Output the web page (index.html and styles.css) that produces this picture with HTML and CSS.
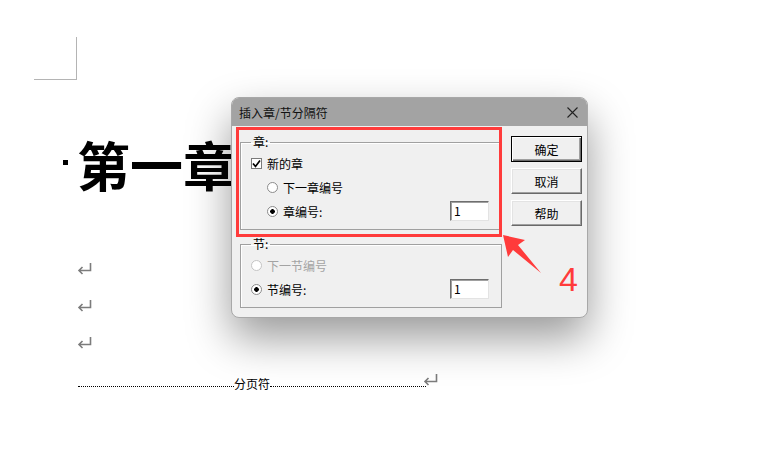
FILE: index.html
```html
<!DOCTYPE html>
<html lang="zh-CN">
<head>
    <meta charset="UTF-8">
    <title>插入章/节分隔符</title>
    <link rel="stylesheet" href="styles.css">
</head>
<body>
<div class="doc">
    <div class="corner"></div>
    <h1 class="chapter"><span class="keep"></span>第一章</h1>
    <p class="para"><svg class="ret" width="15" height="12" viewBox="0 0 15 12"><path d="M13.5 0 V7.5 H2 M5.5 4 L2 7.5 L5.5 11"/></svg></p>
    <p class="para"><svg class="ret" width="15" height="12" viewBox="0 0 15 12"><path d="M13.5 0 V7.5 H2 M5.5 4 L2 7.5 L5.5 11"/></svg></p>
    <p class="para"><svg class="ret" width="15" height="12" viewBox="0 0 15 12"><path d="M13.5 0 V7.5 H2 M5.5 4 L2 7.5 L5.5 11"/></svg></p>
    <div class="page-break">
        <span class="dots"></span>
        <span class="pb-text">分页符</span>
        <span class="dots"></span>
        <svg class="ret pb-ret" width="15" height="12" viewBox="0 0 15 12"><path d="M13.5 0 V7.5 H2 M5.5 4 L2 7.5 L5.5 11"/></svg>
    </div>
</div>

<div class="dialog">
    <div class="titlebar">
        <span>插入章/节分隔符</span>
        <svg class="close" width="11" height="11" viewBox="0 0 11 11"><path d="M0.5 0.5 L10.5 10.5 M10.5 0.5 L0.5 10.5"/></svg>
    </div>
    <div class="dialog-body">
        <div class="groups">
            <fieldset class="group">
                <legend>章:</legend>
                <div class="row">
                    <span class="check"><svg width="9" height="9" viewBox="0 0 9 9"><path d="M1 4.5 L3.5 7.5 L8 1.5"/></svg></span>
                    <span>新的章</span>
                </div>
                <div class="row indent">
                    <span class="radio"></span>
                    <span>下一章编号</span>
                </div>
                <div class="row indent">
                    <span class="radio on"></span>
                    <span>章编号:</span>
                    <span class="num">1</span>
                </div>
            </fieldset>
            <fieldset class="group">
                <legend>节:</legend>
                <div class="row disabled">
                    <span class="radio"></span>
                    <span>下一节编号</span>
                </div>
                <div class="row">
                    <span class="radio on"></span>
                    <span>节编号:</span>
                    <span class="num">1</span>
                </div>
            </fieldset>
        </div>
        <div class="buttons">
            <button class="btn default">确定</button>
            <button class="btn">取消</button>
            <button class="btn">帮助</button>
        </div>
    </div>
</div>

<div class="highlight"></div>
<svg class="callout-arrow" width="45" height="45" viewBox="0 0 45 45"><polygon points="3,3 25,8 18,13 41,41 13,18 8,25"/></svg>
<div class="callout-num">4</div>
</body>
</html>
```

FILE: styles.css
```css
body {
    margin: 0;
    padding: 0;
    background-color: #fff;
    font-family: "Noto Sans CJK SC", "Liberation Sans", sans-serif;
    position: relative;
    height: 453px;
    overflow: hidden;
}

/* document behind the dialog */
.doc {
    padding-top: 37px;
}

.corner {
    margin-left: 34px;
    width: 42px;
    height: 42px;
    border-right: 1px solid #b4b4b4;
    border-bottom: 1px solid #b4b4b4;
}

.chapter {
    margin: 54px 0 0 0;
    padding-left: 63px;
    font-size: 53px;
    line-height: 60px;
    font-weight: 700;
    color: #000;
    display: flex;
    align-items: center;
}

.keep {
    width: 5px;
    height: 5px;
    background-color: #000;
    margin-right: 9px;
    margin-top: -3px;
}

.para {
    margin: 0;
    height: 37px;
    padding-left: 77px;
    display: flex;
    align-items: center;
}

.para:first-of-type {
    margin-top: 56px;
}

.ret path {
    fill: none;
    stroke: #7c7c7c;
    stroke-width: 1.6;
}

.page-break {
    margin: 15px 0 0 78px;
    width: 360px;
    height: 16px;
    display: flex;
    align-items: center;
}

.dots {
    flex: 1;
    height: 0;
    border-top: 1px dotted #000;
    margin-top: 4px;
}

.pb-text {
    font-size: 12px;
    line-height: 16px;
    color: #000;
}

.pb-ret {
    align-self: flex-start;
    margin-left: -3px;
    margin-top: -2px;
}

/* dialog */
.dialog {
    position: absolute;
    left: 231px;
    top: 97px;
    width: 357px;
    height: 221px;
    box-sizing: border-box;
    background-color: #f0f0f0;
    border: 1px solid #a8a8a8;
    border-radius: 8px;
    overflow: hidden;
    box-shadow: 0px 20px 44px rgba(0, 0, 0, 0.4);
    font-size: 12px;
    color: #000;
}

.titlebar {
    height: 28px;
    background-color: #a3a3a3;
    display: flex;
    align-items: center;
    justify-content: space-between;
    padding: 0 9px 0 7px;
    color: #111;
}

.close path {
    stroke: #222;
    stroke-width: 1.1;
}

.dialog-body {
    display: flex;
    gap: 9px;
    padding: 9px 5px 0 8px;
}

.groups {
    display: flex;
    flex-direction: column;
    gap: 7px;
}

.group {
    margin: 0;
    width: 262px;
    box-sizing: border-box;
    padding: 2px 12px 6px 10px;
    border: 1px solid #a0a0a0;
    box-shadow: inset 1px 1px #fff;
    min-inline-size: 0;
}

.group legend {
    padding: 0 2px;
    font-size: 12px;
    line-height: 14px;
}

.row {
    height: 24px;
    display: flex;
    align-items: center;
    gap: 5px;
}

.row.indent {
    padding-left: 16px;
}

.row.disabled {
    color: #a3a3a3;
}

.check {
    width: 11px;
    height: 11px;
    box-sizing: border-box;
    border: 1px solid #7a7a7a;
    background-color: #fff;
    display: flex;
    align-items: center;
    justify-content: center;
}

.check path {
    fill: none;
    stroke: #000;
    stroke-width: 1.7;
}

.radio {
    width: 11px;
    height: 11px;
    box-sizing: border-box;
    border-radius: 50%;
    border: 1px solid #8c8c8c;
    background-color: #fff;
}

.radio.on {
    background: radial-gradient(circle, #000 2px, #fff 2.6px);
}

.disabled .radio {
    border-color: #c4c4c4;
}

.num {
    margin-left: auto;
    width: 39px;
    height: 20px;
    box-sizing: border-box;
    border: 1px solid;
    border-color: #6e6e6e #e3e3e3 #e3e3e3 #6e6e6e;
    box-shadow: inset 1px 1px #a0a0a0;
    background-color: #fff;
    padding-left: 3px;
    line-height: 18px;
}

.buttons {
    display: flex;
    flex-direction: column;
    gap: 6px;
    margin-top: 1px;
}

.btn {
    width: 71px;
    height: 26px;
    padding: 0;
    font-family: inherit;
    font-size: 12px;
    color: #000;
    background-color: #f0f0f0;
    border: 1px solid;
    border-color: #fff #696969 #696969 #fff;
    box-shadow: inset -1px -1px #a0a0a0, inset 1px 1px #e3e3e3;
}

.btn.default {
    border-color: #000;
    box-shadow: inset 1px 1px #fff, inset -1px -1px #696969, inset -2px -2px #a0a0a0;
}

/* annotation on top of the screenshot */
.highlight {
    position: absolute;
    left: 236px;
    top: 127px;
    width: 266px;
    height: 110px;
    box-sizing: border-box;
    border: 3px solid #ff3b3b;
}

.callout-arrow {
    position: absolute;
    left: 500px;
    top: 232px;
}

.callout-arrow polygon {
    fill: #ff3b3b;
}

.callout-num {
    position: absolute;
    left: 559px;
    top: 261px;
    font-family: "Liberation Sans", sans-serif;
    font-size: 34px;
    line-height: 36px;
    color: #ff3b3b;
}
```
